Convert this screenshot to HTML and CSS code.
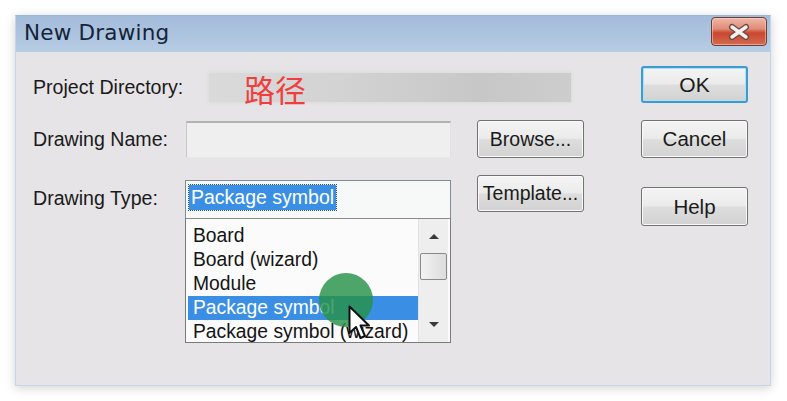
FILE: index.html
```
<!DOCTYPE html>
<html>
<head>
<meta charset="utf-8">
<link rel="stylesheet" href="styles.css">
</head>
<body>
<div class="dialog">
  <div class="titlebar">
    <span class="title">New Drawing</span>
    <div class="close">
      <svg width="26" height="18" viewBox="0 0 26 18">
        <path d="M6 4 L20 14 M20 4 L6 14" stroke="#6a4a46" stroke-width="6" stroke-linecap="round" fill="none"/>
        <path d="M6 4 L20 14 M20 4 L6 14" stroke="#f4f0ee" stroke-width="3.4" stroke-linecap="round" fill="none"/>
      </svg>
    </div>
  </div>
  <div class="content">
    <div class="label row1">Project Directory:</div>
    <div class="pathbar"><span class="path">路径</span></div>
    <div class="btn default ok">OK</div>

    <div class="label row3">Drawing Name:</div>
    <div class="input"></div>
    <div class="btn browse">Browse...</div>
    <div class="btn cancel">Cancel</div>

    <div class="label row5">Drawing Type:</div>
    <div class="combo"><span class="sel">Package symbol</span></div>
    <div class="btn template">Template...</div>
    <div class="btn help">Help</div>

    <div class="list">
      <div class="items">
        <div class="item">Board</div>
        <div class="item">Board (wizard)</div>
        <div class="item">Module</div>
        <div class="item selected">Package symbol</div>
        <div class="item">Package symbol (wizard)</div>
      </div>
      <div class="scrollbar">
        <div class="arrow up"></div>
        <div class="thumb"></div>
        <div class="track"></div>
        <div class="arrow down"></div>
      </div>
      <div class="cursor-dot"></div>
      <svg class="cursor" width="22" height="36" viewBox="0 0 22 36">
        <path d="M1.5 1.5 L1.5 28 L8 22 L12.5 33 L17 31 L12.5 20.5 L21 20.5 Z" fill="#ffffff" stroke="#111" stroke-width="2" stroke-linejoin="round"/>
      </svg>
    </div>
  </div>
</div>
</body>
</html>
```
FILE: styles.css
```
html, body {
  margin: 0;
  padding: 0;
  background: #ffffff;
}

body {
  width: 787px;
  height: 401px;
  overflow: hidden;
  font-family: "Liberation Sans", Arial, sans-serif;
}

.dialog {
  margin: 15px 0 0 15px;
  width: 754px;
  height: 369px;
  border: 1px solid #c3d6ea;
  border-top-color: #9db6d3;
  background: #e6e4e6;
  box-shadow: 0 2px 10px rgba(0, 0, 0, 0.18);
  display: flex;
  flex-direction: column;
}

.titlebar {
  height: 36px;
  background: linear-gradient(180deg, #a3bcda 0%, #aec5e0 60%, #b8cde4 100%);
  display: flex;
  align-items: flex-start;
  justify-content: space-between;
  padding-left: 8px;
  padding-right: 3px;
}

.title {
  font-family: "DejaVu Sans", sans-serif;
  font-size: 21.5px;
  color: #14243a;
  line-height: 34px;
  letter-spacing: 0.2px;
}

.close {
  margin-top: 1px;
  width: 54px;
  height: 27px;
  border: 1px solid #6b3d33;
  border-radius: 4px;
  background: linear-gradient(180deg, #eeb8a8 0%, #e08c78 40%, #c9472f 55%, #d46a50 100%);
  display: flex;
  align-items: center;
  justify-content: center;
  box-shadow: inset 0 0 0 1px rgba(255, 220, 210, 0.5);
}

.content {
  padding: 14px 0 0 17px;
  display: grid;
  grid-template-columns: 152px 266px 26px 107px 57px 107px;
  grid-template-rows: 37px 17px 38px 17px 43px 125px;
}

.label {
  grid-column: 1;
  font-size: 19.6px;
  color: #1a1a1a;
  align-self: center;
  white-space: nowrap;
}

.label.row1 { grid-row: 1; padding-top: 6px; }
.label.row3 { grid-row: 3; }
.label.row5 { grid-row: 5; padding-top: 4px; }

.pathbar {
  grid-column: 2 / 5;
  grid-row: 1;
  margin: 7px 0 0 24px;
  width: 362px;
  height: 29px;
  background: linear-gradient(90deg, #dadada 0%, #d3d3d3 35%, #c7c7c7 75%, #cdcdcd 100%);
  box-shadow: 0 0 3px 1px #dcdcdc;
  overflow: visible;
}

.path {
  display: block;
  padding-left: 35px;
  font-family: "Noto Sans CJK SC", sans-serif;
  font-size: 31px;
  line-height: 31px;
  color: #f03e3e;
}

.btn {
  box-sizing: border-box;
  border: 1px solid #727272;
  border-radius: 3px;
  background: linear-gradient(180deg, #f4f4f4 0%, #ebebeb 48%, #dddddd 52%, #d2d2d2 100%);
  box-shadow: inset 0 0 0 1px #fafafa;
  font-size: 19.5px;
  color: #1a1a1a;
  display: flex;
  align-items: center;
  justify-content: center;
}

.btn.default {
  border: 2px solid #3d9ccf;
  box-shadow: inset 0 0 0 1px #aee0f6;
}

.ok { grid-column: 6; grid-row: 1; height: 37px; font-size: 21px; }
.browse { grid-column: 4; grid-row: 3; height: 38px; }
.cancel { grid-column: 6; grid-row: 3; height: 38px; font-size: 20.5px; }
.template { grid-column: 4; grid-row: 5; height: 37px; align-self: start; }
.help { grid-column: 6; grid-row: 5 / 7; height: 39px; margin-top: 12px; align-self: start; font-size: 20.5px; }

.input {
  grid-column: 2;
  grid-row: 3;
  margin: 1px 0 0 1px;
  height: 37px;
  box-sizing: border-box;
  border-top: 2px solid #b2b2b2;
  border-left: 1px solid #c9c9c9;
  border-right: 1px solid #e0e0e0;
  border-bottom: 1px solid #e8e8e8;
  background: #f0efef;
}

.combo {
  grid-column: 2;
  grid-row: 5;
  margin-top: 5px;
  height: 38px;
  box-sizing: border-box;
  border: 1px solid #7f8d98;
  border-bottom: none;
  background: #f7f8f8;
  padding: 4px 0 0 3px;
}

.sel {
  display: inline-block;
  height: 25px;
  line-height: 25px;
  padding: 0 2px 0 2px;
  font-size: 19.5px;
  color: #ffffff;
  background: #3a8fe4;
  outline: 1px dotted #2b4a80;
}

.list {
  grid-column: 2;
  grid-row: 6;
  position: relative;
  box-sizing: border-box;
  height: 125px;
  border: 1px solid #7a7a7a;
  border-top-color: #8a8a8a;
  background: #fbfbfb;
  display: flex;
  overflow: hidden;
}

.items {
  flex: 1;
  padding: 5px 0 0 2px;
}

.item {
  height: 24px;
  line-height: 24px;
  padding-left: 5px;
  font-size: 19.3px;
  color: #141414;
  white-space: nowrap;
}

.item.selected {
  background: #3a8fe4;
  color: #ffffff;
}

.scrollbar {
  width: 29px;
  margin-right: 2px;
  background: #eeeeee;
  border-left: 1px solid #e2e2e2;
  display: flex;
  flex-direction: column;
  align-items: center;
}

.arrow {
  width: 0;
  height: 0;
  border-left: 5px solid transparent;
  border-right: 5px solid transparent;
}

.arrow.up {
  margin-top: 15px;
  border-bottom: 5px solid #3a3a3a;
}

.arrow.down {
  margin-bottom: 15px;
  border-top: 5px solid #3a3a3a;
}

.thumb {
  margin-top: 14px;
  width: 27px;
  height: 27px;
  box-sizing: border-box;
  border: 1px solid #8a8a8a;
  border-radius: 2px;
  background: linear-gradient(90deg, #f2f2f2, #dcdcdc);
}

.track { flex: 1; }

.cursor-dot {
  position: absolute;
  left: 133px;
  top: 54px;
  width: 54px;
  height: 54px;
  border-radius: 50%;
  background: rgba(38, 145, 72, 0.82);
}

.cursor {
  position: absolute;
  left: 162px;
  top: 86px;
}
```
